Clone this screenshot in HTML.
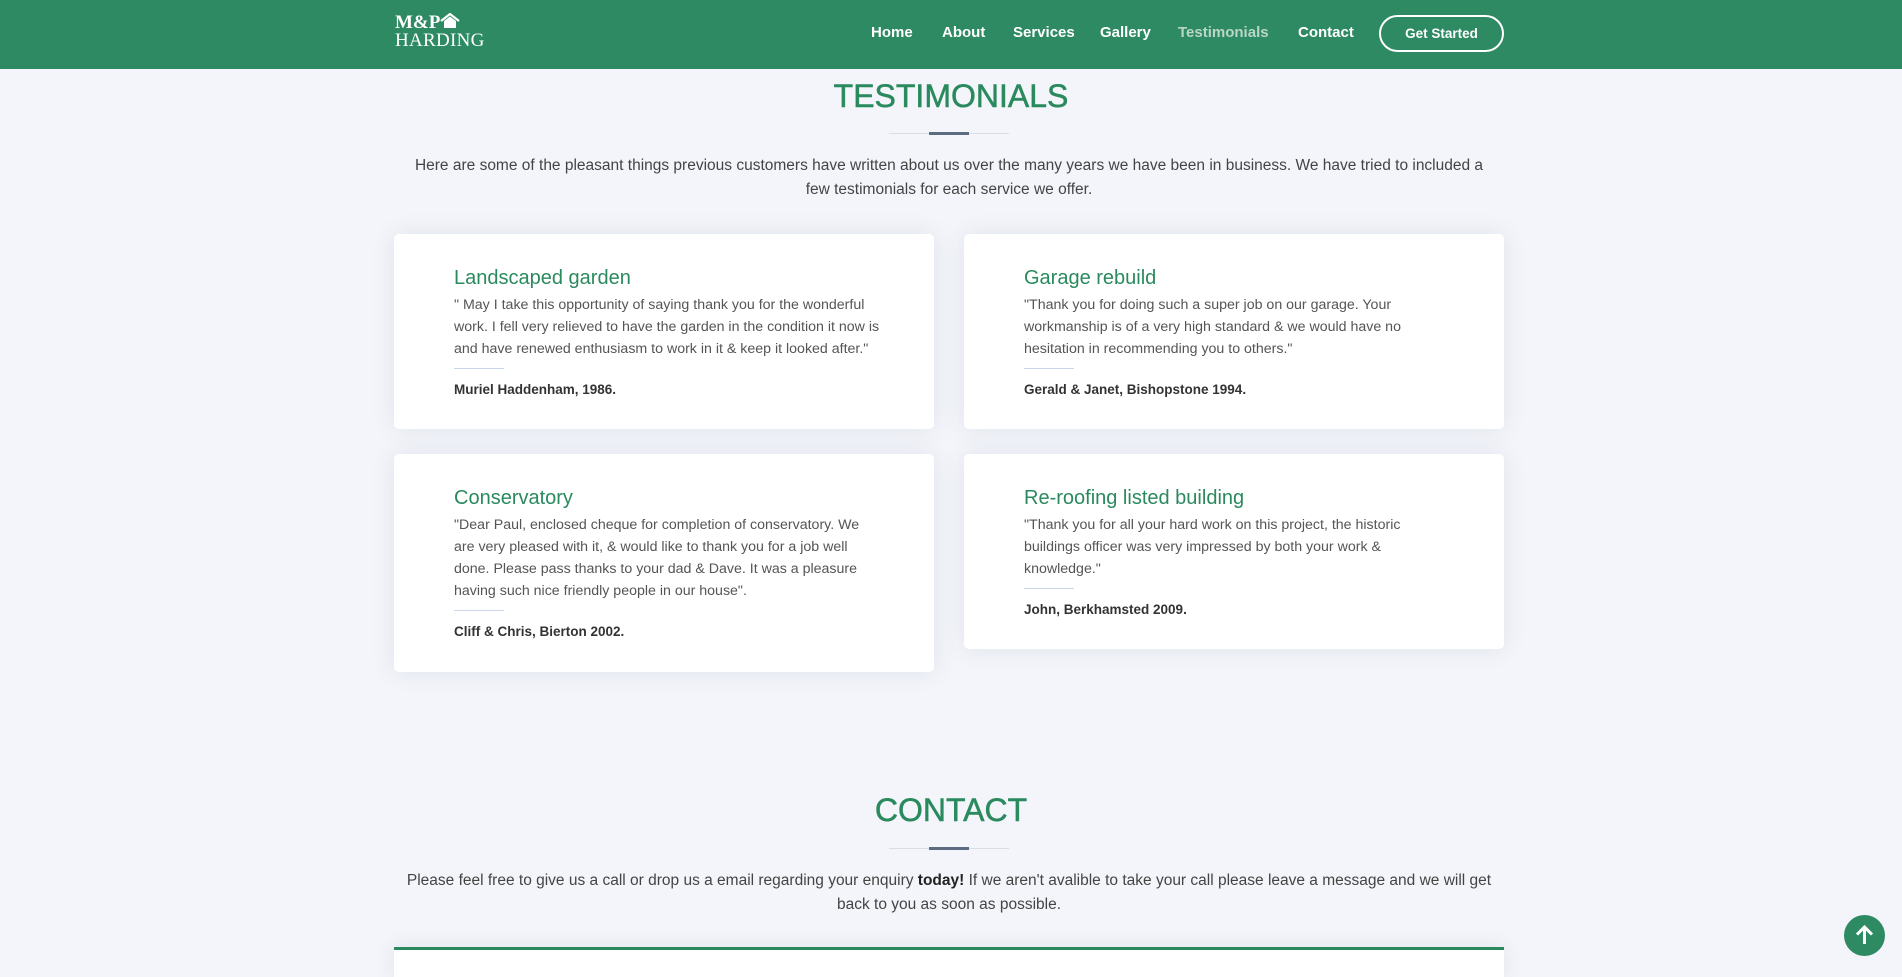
<!DOCTYPE html>
<html><head><meta charset="utf-8"><style>
*{box-sizing:border-box;margin:0;padding:0}
body{width:1902px;height:968px;overflow:hidden;background:#f3f5fa;font-family:"Liberation Sans",sans-serif;color:#444}
.hdr{position:absolute;left:0;top:0;width:1902px;height:69px;background:#2e8a62}
.logo{position:absolute;left:395px;top:13px;font-family:"Liberation Serif",serif;color:#fff;line-height:18px;font-weight:bold}
.logo .a{font-size:19px}
.logo .b{font-size:19px;letter-spacing:0.3px;font-weight:normal}
.nav a{position:absolute;top:24px;color:#fff;font-size:15px;font-weight:bold;text-decoration:none}
.btn{position:absolute;left:1379px;top:15px;width:125px;height:37px;border:2px solid #fff;border-radius:20px;color:#fff;font-size:13.5px;font-weight:bold;text-align:center;line-height:33px}
h2{position:absolute;left:0;width:1902px;text-align:center;color:#2a8a5e;font-size:32px;font-weight:normal;-webkit-text-stroke:0.5px #2a8a5e}
.div{position:absolute;left:889px;width:120px;height:1px;background:#d9dde6}
.div i{position:absolute;left:40px;top:-1px;width:40px;height:3px;background:#5d6b80}
.p{position:absolute;left:394px;width:1110px;text-align:center;font-size:15.5px;line-height:24px;color:#444}
.card{position:absolute;background:#fff;border-radius:5px;box-shadow:0 0 24px rgba(60,70,110,.1);padding:30px 52px 0 60px;width:540px}
.card h3{font-size:20px;font-weight:normal;color:#2a8a5e;line-height:28px;margin-bottom:2px}
.card p{font-size:14.2px;line-height:22px;color:#555}
.card hr{border:0;height:1px;background:#cad7ea;width:50px;margin:8px 0 13px}
.card b{font-size:13.5px;font-weight:bold;color:#333;display:block}
</style></head><body>
<div class="hdr">
<div class="logo"><div class="a">M&amp;P<svg width="20" height="16" viewBox="0 0 20 16" style="vertical-align:-1px"><path d="M1 8L10 1L19 8" stroke="#fff" stroke-width="2.2" fill="none"/><path d="M4 8V15H16V8L10 3.5Z" fill="#fff"/></svg></div><div class="b">HARDING</div></div>
<div class="nav">
<a style="left:871px">Home</a><a style="left:942px">About</a><a style="left:1013px">Services</a><a style="left:1100px">Gallery</a><a style="left:1178px;color:#b9d6c8">Testimonials</a><a style="left:1298px">Contact</a>
</div>
<div class="btn">Get Started</div>
</div>
<h2 style="top:78px">TESTIMONIALS</h2>
<div class="div" style="top:133px"><i></i></div>
<div class="p" style="top:154px">Here are some of the pleasant things previous customers have written about us over the many years we have been in business. We have tried to included a<br>few testimonials for each service we offer.</div>
<div class="card" style="left:394px;top:234px;height:195px"><h3>Landscaped garden</h3><p>" May I take this opportunity of saying thank you for the wonderful work. I fell very relieved to have the garden in the condition it now is and have renewed enthusiasm to work in it &amp; keep it looked after."</p><hr><b>Muriel Haddenham, 1986.</b></div>
<div class="card" style="left:964px;top:234px;height:195px"><h3>Garage rebuild</h3><p>"Thank you for doing such a super job on our garage. Your workmanship is of a very high standard &amp; we would have no hesitation in recommending you to others."</p><hr><b>Gerald &amp; Janet, Bishopstone 1994.</b></div>
<div class="card" style="left:394px;top:454px;height:218px"><h3>Conservatory</h3><p>"Dear Paul, enclosed cheque for completion of conservatory. We<br>are very pleased with it, &amp; would like to thank you for a job well done. Please pass thanks to your dad &amp; Dave. It was a pleasure having such nice friendly people in our house".</p><hr><b>Cliff &amp; Chris, Bierton 2002.</b></div>
<div class="card" style="left:964px;top:454px;height:195px"><h3>Re-roofing listed building</h3><p>"Thank you for all your hard work on this project, the historic<br>buildings officer was very impressed by both your work &amp;<br>knowledge."</p><hr><b>John, Berkhamsted 2009.</b></div>
<h2 style="top:792px">CONTACT</h2>
<div class="div" style="top:848px"><i></i></div>
<div class="p" style="top:869px">Please feel free to give us a call or drop us a email regarding your enquiry <b style="color:#222">today!</b> If we aren't avalible to take your call please leave a message and we will get back to you as soon as possible.</div>
<div style="position:absolute;left:394px;top:947px;width:1110px;height:30px;background:#fff;border-top:3px solid #2a8a5e;box-shadow:0 0 20px rgba(60,70,110,.1)"></div>
<div style="position:absolute;left:1844px;top:915px;width:41px;height:41px;border-radius:50%;background:#2e8a62"><svg width="41" height="41" viewBox="0 0 41 41"><path d="M20.5 29V12M13 19.5L20.5 12L28 19.5" stroke="#fff" stroke-width="3" fill="none"/></svg></div>
</body></html>
